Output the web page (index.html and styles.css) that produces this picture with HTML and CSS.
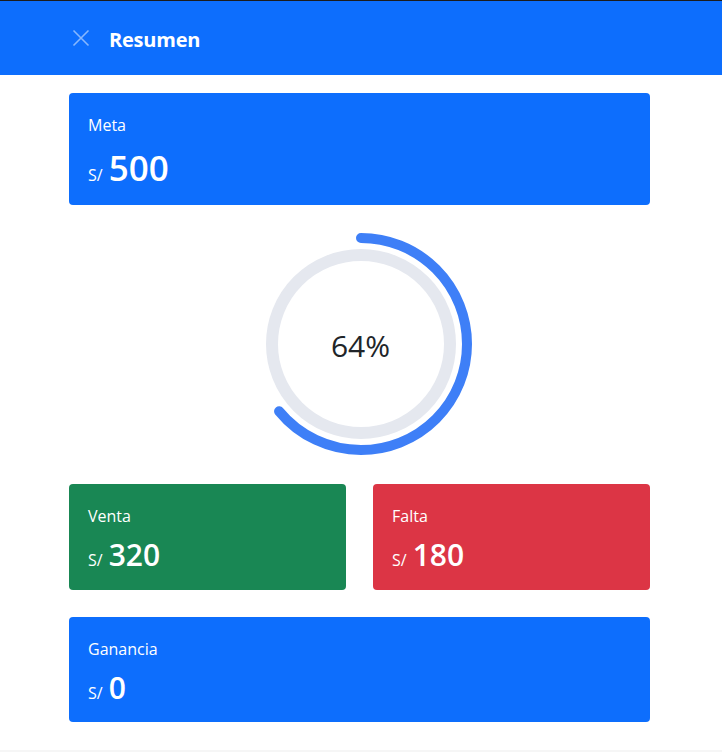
FILE: index.html
```html
<!DOCTYPE html>
<html lang="es">
<head>
<meta charset="utf-8">
<title>Resumen</title>
<link rel="stylesheet" href="styles.css">
</head>
<body>
<header class="topbar">
  <button class="close-btn" aria-label="Cerrar">
    <svg width="18" height="18" viewBox="0 0 18 18"><path d="M1.5 1.5 L16.5 16.5 M16.5 1.5 L1.5 16.5" stroke="currentColor" stroke-width="1.6" fill="none"/></svg>
  </button>
  <h1 class="title">Resumen</h1>
</header>
<main class="content">
  <section class="card card-blue card-lg">
    <div class="label">Meta</div>
    <div class="value"><span class="cur">S/</span><span class="num">500</span></div>
  </section>
  <div class="ring-wrap">
    <svg class="ring" width="224" height="224" viewBox="0 0 224 224">
      <circle cx="112" cy="112" r="89" fill="none" stroke="#e5e8ef" stroke-width="12"/>
      <circle cx="112" cy="112" r="106" fill="none" stroke="#3e7ff7" stroke-width="10" stroke-linecap="round" stroke-dasharray="426.2 666" transform="rotate(-90 112 112)"/>
    </svg>
    <div class="pct">64%</div>
  </div>
  <div class="row">
    <section class="card card-green">
      <div class="label">Venta</div>
      <div class="value"><span class="cur">S/</span><span class="num">320</span></div>
    </section>
    <section class="card card-red">
      <div class="label">Falta</div>
      <div class="value"><span class="cur">S/</span><span class="num">180</span></div>
    </section>
  </div>
  <section class="card card-blue">
    <div class="label">Ganancia</div>
    <div class="value"><span class="cur">S/</span><span class="num">0</span></div>
  </section>
</main>
<div class="footer-line"></div>
</body>
</html>
```
FILE: styles.css
```css
* { box-sizing: border-box; }
html, body { margin: 0; padding: 0; }
body {
  font-family: "Open Sans", "Noto Sans", sans-serif;
  background: #fff;
  color: #212529;
  border-top: 1px solid #1c1c1c;
}
.topbar {
  background: #0d6efd;
  height: 74px;
  display: flex;
  align-items: center;
  padding-left: 72px;
  gap: 19px;
}
.close-btn {
  background: none;
  border: 0;
  padding: 0;
  color: #86b7fe;
  width: 18px;
  height: 18px;
  display: flex;
}
.title {
  margin: 0;
  color: #fff;
  font-size: 20px;
  font-weight: 700;
  letter-spacing: -0.2px;
  position: relative;
  top: 1px;
}
.content {
  width: 581px;
  margin-left: 69px;
  padding-top: 18px;
  display: flex;
  flex-direction: column;
}
.card {
  border-radius: 4px;
  color: #fff;
  padding: 20px 19px 0;
  height: 105px;
}
.card-lg { height: 112px; }
.card-blue { background: #0d6efd; }
.card-green { background: #198754; }
.card-red { background: #dc3545; }
.label {
  font-size: 16px;
  line-height: 24px;
}
.value {
  margin-top: 8px;
  display: flex;
  align-items: baseline;
  gap: 6px;
}
.cur { font-size: 16px; }
.num { font-size: 30px; font-weight: 600; line-height: 38px; }
.card-lg .value { margin-top: 12px; }
.card-lg .num { font-size: 35px; }
.ring-wrap {
  position: relative;
  width: 224px;
  height: 224px;
  margin: 27px auto 28px;
  left: 1px;
}
.ring { display: block; }
.pct {
  position: absolute;
  inset: 0;
  display: flex;
  align-items: center;
  justify-content: center;
  font-size: 30px;
  color: #212529;
  padding-top: 2px;
}
.row {
  display: grid;
  grid-template-columns: 1fr 1fr;
  gap: 27px;
  margin-bottom: 27px;
}
.row .card { height: 106px; }
.footer-line {
  margin-top: 28px;
  height: 2px;
  background: #f6f6f6;
}
```
